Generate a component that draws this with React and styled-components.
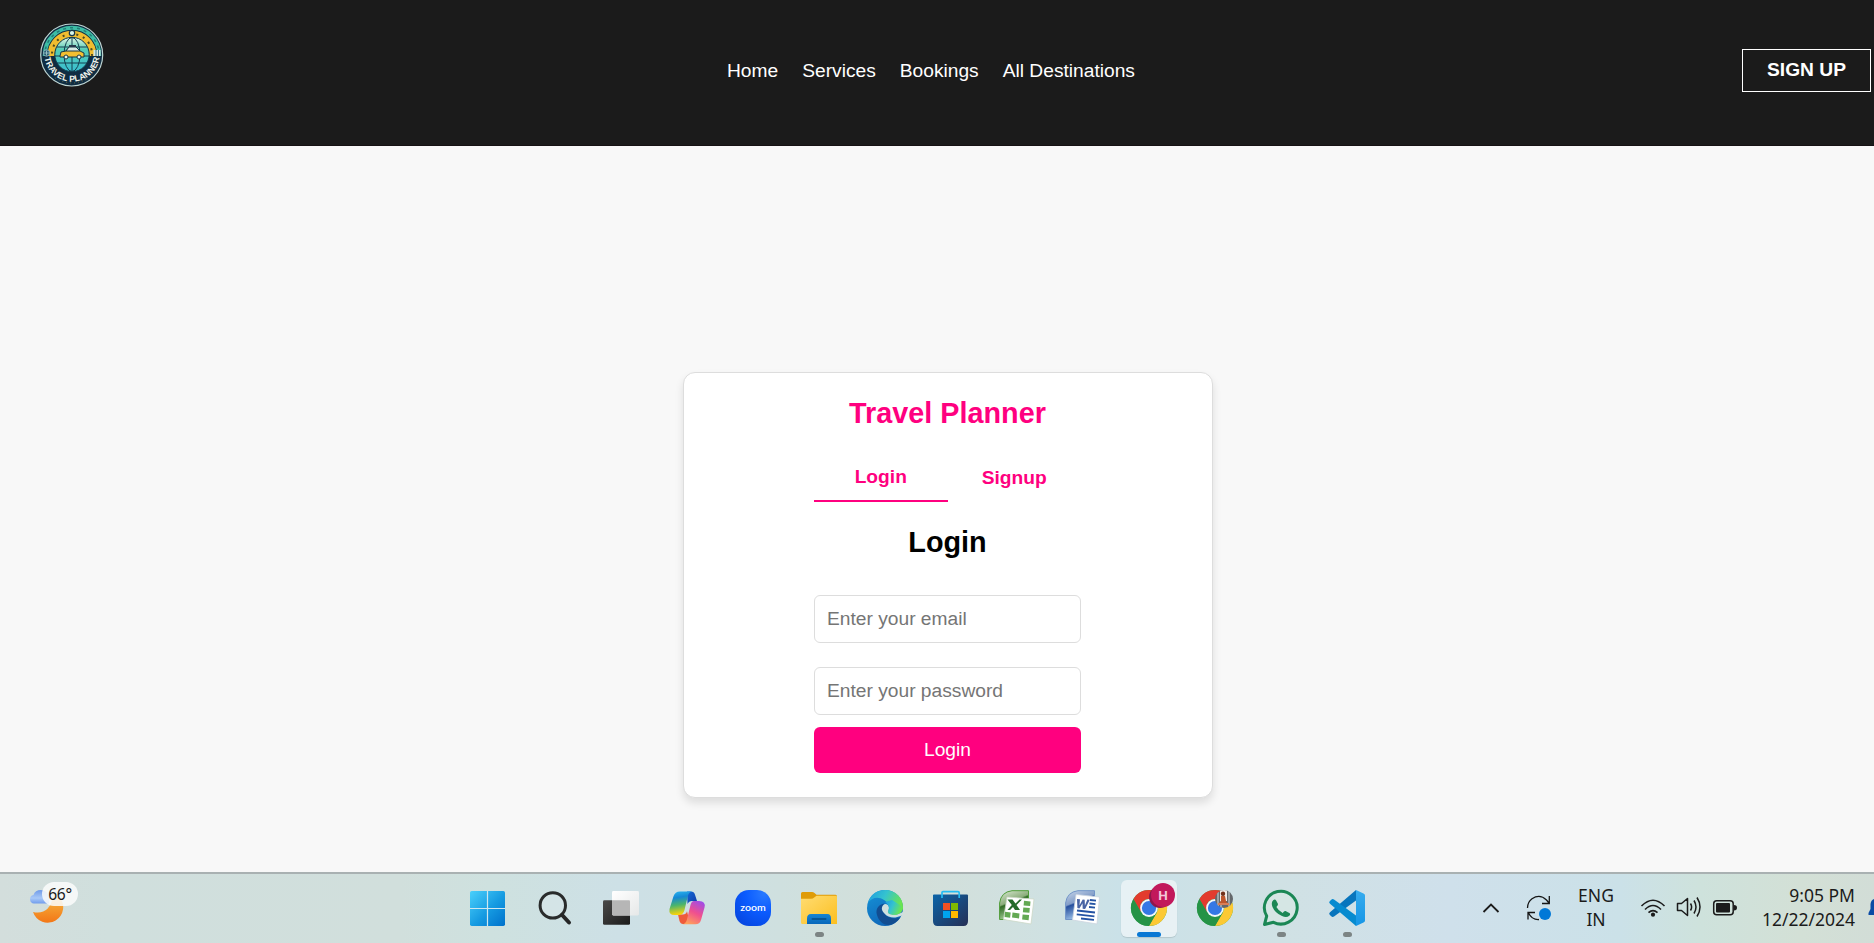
import React from "react";
import styled, { createGlobalStyle } from "styled-components";

const GlobalStyle = createGlobalStyle`
  * { box-sizing: border-box; }
  body {
    margin: 0;
    background: #f8f8f8;
    font-family: "Liberation Sans", Arial, sans-serif;
    font-size: 19.2px;
    overflow: hidden;
  }
`;

const Screen = styled.div`
  display: flex;
  flex-direction: column;
  width: 100%;
  height: 943px;
`;

const Header = styled.header`
  display: flex;
  align-items: center;
  height: 146px;
  padding: 0 3px 5px 0;
  background: #1b1b1b;
  border-bottom: 1px solid #161214;
`;

const LogoArea = styled.div`
  flex: 0 0 727px;
  align-self: flex-start;
  padding: 22px 0 0 40px;
  svg { display: block; }
`;

const Nav = styled.nav`
  display: flex;
  gap: 24px;
  padding-top: 2px;
`;

const NavLink = styled.a`
  color: #fff;
  line-height: 22px;
  white-space: nowrap;
`;

const SignUpButton = styled.button`
  margin-left: auto;
  width: 129px;
  height: 43px;
  padding: 0;
  border: 1px solid #fff;
  background: transparent;
  color: #fff;
  font: bold 19.2px "Liberation Sans", Arial, sans-serif;
`;

const Main = styled.main`
  flex: 1;
  display: flex;
  justify-content: center;
  align-items: flex-start;
  padding: 226px 0 0 22px;
`;

const Card = styled.section`
  display: flex;
  flex-direction: column;
  align-items: center;
  width: 530px;
  height: 426px;
  padding: 23px 1px 0 0;
  background: #fff;
  border: 1px solid #ddd;
  border-radius: 12px;
  box-shadow: 0 5px 8px rgba(0, 0, 0, 0.11);
`;

const Heading = styled.h2`
  margin: 0;
  font-size: 28.8px;
  line-height: 34px;
  color: ${(p) => (p.$accent ? "#ff007f" : "#000")};
`;

const Tabs = styled.div`
  display: flex;
  width: 267px;
  margin: 23px 0 23px;
`;

const Tab = styled.button`
  flex: 1;
  height: 49px;
  padding: 0;
  border: 0;
  border-bottom: ${(p) => (p.$active ? "2px solid #ff007f" : "0")};
  background: none;
  color: #ff007f;
  font: bold 19.2px "Liberation Sans", Arial, sans-serif;
`;

const Form = styled.form`
  display: flex;
  flex-direction: column;
  width: 267px;
  margin-top: 36px;
`;

const Field = styled.input`
  height: 48px;
  margin-bottom: ${(p) => p.$after}px;
  padding: 0 12px;
  border: 1px solid #ddd;
  border-radius: 6px;
  background: #fff;
  font: 19.2px "Liberation Sans", Arial, sans-serif;
  &::placeholder { color: #757575; opacity: 1; }
`;

const Submit = styled.button`
  height: 46px;
  border: 0;
  border-radius: 6px;
  background: #ff007f;
  color: #fff;
  font: 19.2px "Liberation Sans", Arial, sans-serif;
`;

const Taskbar = styled.footer`
  display: flex;
  height: 71px;
  border-top: 2px solid #a9b1b2;
  background: linear-gradient(90deg, #d3dedc 0, #d0dfdd 110px, #d1dfdc 400px, #cee1df 490px, #cde0e6 620px, #cfe0df 780px, #d3dfd9 910px, #cfe1e2 1050px, #cae1e8 1120px, #d0e1e4 1280px, #cfe0eb 1450px, #cbe1e8 1620px, #cee2dc 1700px, #d3e0d6 1800px, #d2ddd7 1874px);
  color: #1b1b1b;
  font-family: "Noto Sans", "Open Sans", sans-serif;
`;

const Weather = styled.div`
  position: relative;
  flex: 0 0 456px;
  padding: 14px 0 0 29px;
  svg { display: block; }
`;

const Temperature = styled.span`
  position: absolute;
  left: 42px;
  top: 8px;
  width: 36px;
  height: 24px;
  border-radius: 12px;
  background: rgba(250, 252, 252, 0.86);
  font-size: 15.6px;
  line-height: 24px;
  letter-spacing: -0.3px;
  text-align: center;
`;

const Apps = styled.div`
  display: flex;
  flex: 0 0 924px;
`;

const AppSlot = styled.div`
  display: flex;
  flex-direction: column;
  align-items: center;
  width: 66px;
  height: 69px;
  padding-top: 6px;
`;

const AppTile = styled.div`
  display: flex;
  flex-direction: column;
  align-items: center;
  justify-content: space-between;
  width: 56px;
  height: 57px;
  padding-top: 10px;
  border-radius: 6px;
  background: ${(p) => (p.$active ? "rgba(255,255,255,.55)" : "transparent")};
  box-shadow: ${(p) => (p.$active ? "0 1px 1px rgba(0,0,0,.12)" : "none")};
  svg { display: block; overflow: visible; }
`;

const Indicator = styled.span`
  width: ${(p) => (p.$active ? 24 : 9)}px;
  height: 5px;
  border-radius: 3px;
  background: ${(p) => (p.$active ? "#0878d4" : p.$open ? "#7c8484" : "transparent")};
`;

const Tray = styled.div`
  flex: 1;
  display: flex;
  align-items: flex-start;
  padding: 10px 0 0 102px;
  svg { display: block; }
`;

const TraySlot = styled.div`
  flex: none;
  width: ${(p) => p.$w}px;
  padding-top: ${(p) => p.$top || 0}px;
`;

const TrayText = styled.div`
  flex: none;
  width: ${(p) => p.$w}px;
  margin-top: -1px;
  font-size: 17.5px;
  line-height: 24px;
  letter-spacing: ${(p) => p.$spacing}px;
  text-align: ${(p) => p.$align};
  white-space: nowrap;
`;

const Logo = () => (
  <svg width="64" height="66" viewBox="0 0 64 66">
    <defs>
      <linearGradient id="globe" x2="0" y2="1">
        <stop stopColor="#e4f6e8" /><stop offset=".35" stopColor="#55cdb5" /><stop offset="1" stopColor="#39bed0" />
      </linearGradient>
      <path id="logoArc" d="M4.600 36A27.700 27.700 0 0 0 59.400 36" />
      <clipPath id="upper"><path d="M0 0H64V34H0Z" /></clipPath>
    </defs>
    <circle cx="31.700" cy="33" r="31" fill="#102d42" stroke="#bed5d3" strokeWidth="1.2" />
    <g clipPath="url(#upper)" fill="none">
      <circle cx="32" cy="33" r="27.2" stroke="#3dbda5" strokeWidth="4" />
      <circle cx="32" cy="33" r="27.2" stroke="#247c77" strokeWidth="1.5" strokeDasharray="3 4" />
      <circle cx="32" cy="33" r="20.8" stroke="#f0bd30" strokeWidth="7" />
      <circle cx="32" cy="32" r="20" stroke="#4f4a20" strokeWidth="2" strokeDasharray="2 5" />
    </g>
    <circle cx="32" cy="32.500" r="17.2" fill="url(#globe)" stroke="#12394a" />
    <g fill="none" stroke="#143f50" strokeWidth="1">
      <path d="M32 15V49M17 25H47M14 34H50M17 41H47" />
      <ellipse cx="32" cy="32.500" rx="8" ry="17" />
    </g>
    <path d="M20 34L21 30L26 29L29 25H36L40 29L44 31V35H20Z" fill="#f3bf31" stroke="#173749" />
    <path d="M26 29L29 25H36L40 29Z" fill="#d8ece5" stroke="#173749" />
    <path d="M29 24h7" stroke="#26394a" strokeWidth="2" />
    <circle cx="26" cy="35" r="2" fill="#e4f5ef" stroke="#153546" />
    <circle cx="39" cy="35" r="2" fill="#e4f5ef" stroke="#153546" />
    <circle cx="32" cy="11" r="2.7" fill="#d8f6ec" stroke="#183647" strokeWidth="1.2" />
    <circle cx="6.500" cy="31" r="3.2" fill="#255c72" stroke="#97bbc3" strokeWidth=".8" />
    <path d="M4 31H9M6.500 28.500V33.500" stroke="#a9cdd1" strokeWidth=".8" />
    <rect x="53.5" y="28" width="7" height="6" fill="#d3e6e1" />
    <path d="M56 28V34M58.5 28V34" stroke="#36748b" />
    <path d="M15 56Q32 66 49 56" fill="none" stroke="#827f49" strokeWidth=".8" strokeDasharray="1 3" />
    <text fill="#f2f5ee" fontFamily="Liberation Sans" fontWeight="700" fontSize="8.600">
      <textPath href="#logoArc" startOffset="50%" textAnchor="middle" textLength="79">TRAVEL PLANNER</textPath>
    </text>
  </svg>
);

const WeatherIcon = () => (
  <svg width="38" height="38" viewBox="0 0 38 38">
    <defs>
      <linearGradient id="moon" x2="0" y2="1"><stop stopColor="#f5b640" /><stop offset="1" stopColor="#f37717" /></linearGradient>
      <linearGradient id="cloud" x2="0" y2="1"><stop stopColor="#6f9ae9" /><stop offset=".6" stopColor="#a9c9f7" /><stop offset="1" stopColor="#709ced" /></linearGradient>
    </defs>
    <path d="M5 15.500a4.300 4.300 0 0 1-.5-8.500Q6 2 12 2q7 1 8 7v6.500Z" fill="url(#cloud)" />
    <path d="M30 8.500A15.500 15.500 0 1 1 4 24Q20 27.500 24 9Z" fill="url(#moon)" />
  </svg>
);

const Icon = ({ children }) => <svg width="36" height="36" viewBox="0 0 36 36">{children}</svg>;

const StartIcon = () => (
  <Icon>
    <defs><linearGradient id="win" x2="1" y2="1"><stop stopColor="#4bd0fb" /><stop offset=".55" stopColor="#159ae1" /><stop offset="1" stopColor="#0071cb" /></linearGradient></defs>
    <rect x="-1" y="1" width="35" height="35" rx="1.7" fill="url(#win)" />
    <path d="M16.500 1V36M-1 18.500H34" stroke="#cfe7ef" strokeWidth="1.2" />
  </Icon>
);

const SearchIcon = () => (
  <Icon>
    <circle cx="15.800" cy="15.4" r="12.7" fill="#d8e6e9" fillOpacity=".6" stroke="#292b2b" strokeWidth="3" />
    <path d="M25.100 25L32 32.500" stroke="#252626" strokeWidth="4" strokeLinecap="round" />
  </Icon>
);

const TaskViewIcon = () => (
  <Icon>
    <defs>
      <linearGradient id="tv1" x2="1" y2="1"><stop stopColor="#4a4a49" /><stop offset="1" stopColor="#1b1b1b" /></linearGradient>
      <linearGradient id="tv2" x2="1" y2="1"><stop stopColor="#fff" /><stop offset="1" stopColor="#e6e8e8" /></linearGradient>
    </defs>
    <rect x="0" y="10.2" width="27" height="24.6" rx="1.4" fill="url(#tv1)" />
    <rect x="9" y="1" width="27" height="24.4" rx="1.4" fill="url(#tv2)" />
    <path d="M9 10.2H26Q27 10.2 27 11.2V25.4H10.4Q9 25.4 9 24Z" fill="#b6b6b6" />
  </Icon>
);

const CopilotIcon = () => (
  <Icon>
    <defs>
      <linearGradient id="cpA" x2=".15" y2="1"><stop stopColor="#2bb8f2" /><stop offset=".3" stopColor="#1588d4" /><stop offset=".62" stopColor="#4bb56c" /><stop offset="1" stopColor="#f7d30c" /></linearGradient>
      <linearGradient id="cpB" x1=".8" x2=".3" y2="1"><stop stopColor="#a04ce8" /><stop offset=".5" stopColor="#f0508e" /><stop offset="1" stopColor="#ffa25a" /></linearGradient>
      <linearGradient id="cpC" x2="1" y2="1"><stop stopColor="#1268d8" /><stop offset="1" stopColor="#113aa5" /></linearGradient>
    </defs>
    <path d="M18 1.500h4q3 0 4 3.200l2 6.400h-5q-3 0-4.500 3Z" fill="url(#cpC)" />
    <path d="M9 24.500h5q3 0 4-3.300L20 29l-3 5h-3q-2.500 0-3.500-3Z" fill="#ef5b3b" />
    <path d="M11 1.500h12q-3 .5-4 4L15.500 20q-1.300 5-5.500 5H5.500q-6 0-5-6L4.500 6.300Q6 1.500 11 1.500Z" fill="url(#cpA)" />
    <path d="M25 11h5q7 0 5.500 6.500L32 30q-1.300 4.300-5.500 4.300H13q3.700-.4 4.800-4.300L21.500 15q1-4 3.500-4Z" fill="url(#cpB)" />
  </Icon>
);

const ZoomIcon = () => (
  <Icon>
    <defs><radialGradient id="zm" cx=".8" cy=".1" r="1"><stop stopColor="#2879ff" /><stop offset=".5" stopColor="#0b5cff" /><stop offset="1" stopColor="#0648e3" /></radialGradient></defs>
    <rect x="0" y="0" width="36" height="36" rx="14" fill="url(#zm)" />
    <text x="18" y="20.800" textAnchor="middle" textLength="25.500" lengthAdjust="spacingAndGlyphs" fill="#fff" fontFamily="Lato" fontWeight="600" fontSize="10">zoom</text>
  </Icon>
);

const FolderIcon = () => (
  <Icon>
    <defs>
      <linearGradient id="fold" x2="1" y2="1"><stop stopColor="#ffdc72" /><stop offset="1" stopColor="#fcbf20" /></linearGradient>
      <linearGradient id="foldB" x2="0" y2="1"><stop stopColor="#1785d4" /><stop offset="1" stopColor="#0767bb" /></linearGradient>
    </defs>
    <path d="M0 3.500Q0 2 1.500 2H11Q12.500 2 13.500 3L15.500 4.800H34.500Q36 4.800 36 6.500V12H0Z" fill="#df9b08" />
    <path d="M0 8.800H10Q12 8.800 13.500 7.300L15.500 5.700H35Q36 5.700 36 7V34H1.500Q0 34 0 32.500Z" fill="url(#fold)" />
    <path d="M6 34V28.500Q6 24 10 24H26.500Q30 24 30 28.500V34Z" fill="url(#foldB)" />
    <path d="M11.500 29H24.500" stroke="#075697" strokeWidth="2" strokeLinecap="round" />
  </Icon>
);

const EdgeIcon = () => (
  <Icon>
    <defs>
      <linearGradient id="edA" x2="1" y2=".4"><stop stopColor="#1c9be1" /><stop offset=".5" stopColor="#35c3cf" /><stop offset="1" stopColor="#6be64e" /></linearGradient>
      <linearGradient id="edB" x2=".5" y2="1"><stop stopColor="#1694d8" /><stop offset="1" stopColor="#0f66b8" /></linearGradient>
    </defs>
    <circle cx="18" cy="18" r="18" fill="url(#edB)" />
    <path d="M1 13C4 3 11 0 18 0C29 0 36 8 36 17C36 23 31 25 27 25C23 25 20 23 21 21C24 16 20 12 17 10C11 6 4 8 1 13Z" fill="url(#edA)" />
    <path d="M17.500 13.500C12 14 8 19 10 25C12 32 18 37 26 34C30 32 33 28 33.500 27C28 30 20 28 17 23C14 19 15 16 17.500 13.500Z" fill="#124d91" />
    <path d="M18 14C14 16 14 20 17 23C22 29 29 28 33.500 26L36 25V22L31 24.200C27 25.500 20 24.500 21 21.200C23 18 22 14 18 14Z" fill="#d0e0df" />
    <path d="M27 24.800C23 24.500 20.600 22.900 21.300 20.500C23 17 21 14 18 12L25 10L36 17C35.500 22 31 25 27 24.800Z" fill="url(#edA)" />
  </Icon>
);

const StoreIcon = () => (
  <Icon>
    <defs><linearGradient id="store" x2="1" y2="1"><stop stopColor="#0b64a8" /><stop offset="1" stopColor="#262f55" /></linearGradient></defs>
    <path d="M0 5Q0 4.500 1 4.500H34Q35 4.500 35 5.500V31Q35 36 30.500 36H4.500Q0 36 0 31Z" fill="url(#store)" />
    <path d="M9 8V2.500Q9 1.700 10 1.700H25Q26.200 1.700 26.200 3V8" fill="none" stroke="#24bbf2" strokeWidth="1.700" />
    <path fill="#f25022" d="M10 13h7v7h-7z" /><path fill="#7fba00" d="M18 13h7v7h-7z" />
    <path fill="#00a4ef" d="M10 21h7v7h-7z" /><path fill="#ffb900" d="M18 21h7v7h-7z" />
  </Icon>
);

const ExcelIcon = () => (
  <Icon>
    <defs><linearGradient id="xl" x2=".4" y2="1"><stop stopColor="#dcebd5" /><stop offset=".45" stopColor="#8bad7b" /><stop offset=".5" stopColor="#316c26" /><stop offset="1" stopColor="#b6dba8" /></linearGradient></defs>
    <path d="M.6 29.500V13Q2 2 13 .7H29.500V29.500Z" fill="url(#xl)" stroke="#4f9c38" />
    <path d="M8 7L35 9L32 34L4.500 29.500Z" fill="#fff" stroke="#ccd8c7" strokeWidth=".8" />
    <g fill="#63a953">
      <path d="M25 10.800l6.500.6-.4 4.500-6.500-.5zM24.300 17.500l6.500.5-.4 4.800-6.500-.6zM23.600 24.400l6.500.6-.5 5.300-6.500-.9zM13.500 22.500l7 .9-.5 5.100-7-1zM6 21.800l5.700.7-.6 5.200-5.500-.8z" />
    </g>
    <path d="M8.500 9.500h5l3 4 4-4H23l-5.500 5.600 3.500 5h-5l-2-3.200-3 3H8.500l4.300-4.900z" fill="#246b2a" />
  </Icon>
);

const WordIcon = () => (
  <Icon>
    <defs><linearGradient id="wd" x2=".4" y2="1"><stop stopColor="#c9d8eb" /><stop offset=".45" stopColor="#839dc8" /><stop offset=".5" stopColor="#27509e" /><stop offset="1" stopColor="#a9cdf0" /></linearGradient></defs>
    <path d="M.6 29.500V13Q2 2 13 .7H29.500V29.500Z" fill="url(#wd)" stroke="#7194c8" />
    <path d="M11 4.500L34.500 7L32 34L7.500 30Z" fill="#fff" stroke="#cbd4df" strokeWidth=".8" />
    <path d="M12 9l3 .3-.5 6 3.200-5.700 2 .2.200 5.700 2.500-6 2.400.2-4.700 9.300-2.400-.3-.2-5.400-3.100 5.100-2-.3z" fill="#4964a4" />
    <path d="M25 10l6 .6M24.500 13.500l6 .6M24 17l6 .6M12 20.500l18 2M11.700 24.300l17.700 2M16 28.500l13 1.400" stroke="#2453a4" strokeWidth="1.800" />
  </Icon>
);

const ChromeArt = () => (
  <>
    <circle cx="18" cy="18" r="18" fill="#35a853" />
    <path d="M2.400 9A18 18 0 0 1 33.600 9H18A9 9 0 0 0 10.200 13.500L10.200 22.500Z" fill="#e33b2e" />
    <path d="M33.600 9A18 18 0 0 1 18 36L25.800 22.500A9 9 0 0 0 25.800 13.500L18 9Z" fill="#fcc934" />
    <path d="M2.400 9A18 18 0 0 0 18 36L25.800 22.500H10.200Z" fill="#259346" />
    <circle cx="18" cy="18" r="8.900" fill="#f3f8fa" /><circle cx="18" cy="18" r="7.100" fill="#3478e5" />
  </>
);

const ChromeProfile = () => (
  <Icon>
    <ChromeArt />
    <circle cx="29" cy="7" r="11" fill="#8d174c" />
    <circle cx="32" cy="5" r="12" fill="#c2185b" />
    <text x="32" y="9.900" textAnchor="middle" fill="#f3c8d9" fontFamily="Roboto" fontWeight="700" fontSize="13.500">H</text>
  </Icon>
);

const ChromePhoto = () => (
  <Icon>
    <ChromeArt />
    <clipPath id="avatar"><circle cx="27" cy="9" r="9" /></clipPath>
    <g clipPath="url(#avatar)">
      <path d="M18 0H36V18H18Z" fill="#65686b" />
      <path d="M21 0V18M24 0V18M32 0V18" stroke="#d8dcdd" />
      <path d="M23 0H30V11H23Z" fill="#f1ece8" />
      <circle cx="26" cy="3.800" r="2.200" fill="#723019" />
      <path d="M24 6H28L29 11L31 14H21L24 11Z" fill="#be562c" />
      <path d="M21 14H32" stroke="#d97d55" strokeWidth="2" />
    </g>
  </Icon>
);

const WhatsAppIcon = () => (
  <Icon>
    <path d="M1.500 34.500L3.700 26A16.400 16.400 0 1 1 10.500 32.300Z" fill="#d5e6e4" stroke="#1b8755" strokeWidth="3" strokeLinejoin="round" />
    <path d="M10.200 10.200Q12 8.700 13.300 10.700L15 14Q15.300 15.200 13.400 17Q15.500 21 19.700 22.900Q21.300 20.600 22.500 21L26.300 23Q28 24 26.300 25.700Q23.500 28 19 26Q12 23 9.500 17Q7.800 12.700 10.200 10.200Z" fill="#1b8755" />
  </Icon>
);

const VSCodeIcon = () => (
  <Icon>
    <defs><linearGradient id="vsc" x2="0" y2="1"><stop stopColor="#37acee" /><stop offset="1" stopColor="#1595e6" /></linearGradient></defs>
    <path d="M27 0V10.500L5 26.500Q3.500 27.500 2 26L.7 24.800Q-.5 23.600 1 22.300Z" fill="#0875bd" />
    <path d="M27 36V25.500L5 9.500Q3.500 8.500 2 10L.7 11.200Q-.5 12.400 1 13.700Z" fill="#078bd0" />
    <path d="M27 0L34.500 3.400Q36 4 36 5.500V30.500Q36 32 34.500 32.600L27 36Z" fill="url(#vsc)" />
  </Icon>
);

const APPS = [
  { name: "start", icon: StartIcon },
  { name: "search", icon: SearchIcon },
  { name: "taskview", icon: TaskViewIcon },
  { name: "copilot", icon: CopilotIcon },
  { name: "zoom", icon: ZoomIcon },
  { name: "files", icon: FolderIcon, open: true },
  { name: "edge", icon: EdgeIcon },
  { name: "store", icon: StoreIcon },
  { name: "excel", icon: ExcelIcon },
  { name: "word", icon: WordIcon },
  { name: "chrome", icon: ChromeProfile, active: true },
  { name: "chrome-photo", icon: ChromePhoto },
  { name: "whatsapp", icon: WhatsAppIcon, open: true },
  { name: "vscode", icon: VSCodeIcon, open: true },
];

const ChevronIcon = () => (
  <svg width="18" height="12" viewBox="0 0 18 12"><path d="M1.500 10L9 2.500L16.500 10" fill="none" stroke="#1b1b1b" strokeWidth="1.800" /></svg>
);

const SyncIcon = () => (
  <svg width="26" height="26" viewBox="0 0 26 26">
    <path d="M1.500 13Q1.500 7 6 3.700Q14-1.500 20.500 5L23 8M23.300 1V8.500H16M2 24.500V17.500H9M2.500 18Q6 25 13 24.500" fill="none" stroke="#151515" strokeWidth="1.300" />
    <circle cx="19" cy="19" r="6" fill="#0078d7" />
  </svg>
);

const WifiIcon = () => (
  <svg width="26" height="20" viewBox="0 0 26 20">
    <path d="M1.500 8Q13-3.500 24.500 8M5 11.500Q13 3.500 21 11.500M8.500 14.700Q13 10.500 17.500 14.700" fill="none" stroke="#1b1b1b" strokeWidth="1.600" />
    <circle cx="13" cy="16.700" r="2.100" fill="#1b1b1b" />
  </svg>
);

const SpeakerIcon = () => (
  <svg width="26" height="22" viewBox="0 0 26 22">
    <path d="M1.500 7.500H5.500L11.500 2.500V19.500L5.500 14.500H1.500Z" fill="none" stroke="#1b1b1b" strokeWidth="1.500" strokeLinejoin="round" />
    <path d="M14.500 7.500Q16.700 11 14.500 14.500M18 4.500Q22 11 18 17.500M21 1.500Q27 11 21 20.500" fill="none" stroke="#1b1b1b" strokeWidth="1.500" />
  </svg>
);

const BatteryIcon = () => (
  <svg width="26" height="18" viewBox="0 0 26 18">
    <rect x="1.700" y="1.700" width="19.500" height="14" rx="3" fill="none" stroke="#1b1b1b" strokeWidth="1.500" />
    <rect x="4" y="4" width="14" height="9.500" rx="1" fill="#1b1b1b" />
    <path d="M22 6Q25 6 25 8.700T22 11.400Z" fill="#1b1b1b" />
  </svg>
);

const BellIcon = () => (
  <svg width="6" height="20" viewBox="0 0 6 20">
    <path d="M6 1Q3 2 2.500 6V11L.5 15V17H6Z" fill="#0a4ba5" />
  </svg>
);

export default function App() {
  return (
    <Screen>
      <GlobalStyle />
      <Header>
        <LogoArea><Logo /></LogoArea>
        <Nav>
          {["Home", "Services", "Bookings", "All Destinations"].map((label) => (
            <NavLink key={label}>{label}</NavLink>
          ))}
        </Nav>
        <SignUpButton>SIGN UP</SignUpButton>
      </Header>
      <Main>
        <Card>
          <Heading $accent>Travel Planner</Heading>
          <Tabs>
            <Tab $active>Login</Tab>
            <Tab>Signup</Tab>
          </Tabs>
          <Heading>Login</Heading>
          <Form>
            <Field type="email" placeholder="Enter your email" $after={24} />
            <Field type="password" placeholder="Enter your password" $after={12} />
            <Submit type="button">Login</Submit>
          </Form>
        </Card>
      </Main>
      <Taskbar>
        <Weather>
          <WeatherIcon />
          <Temperature>66°</Temperature>
        </Weather>
        <Apps>
          {APPS.map(({ name, icon: AppIcon, open, active }) => (
            <AppSlot key={name}>
              <AppTile $active={active}>
                <AppIcon />
                <Indicator $open={open} $active={active} />
              </AppTile>
            </AppSlot>
          ))}
        </Apps>
        <Tray>
          <TraySlot $w={44} $top={18}><ChevronIcon /></TraySlot>
          <TraySlot $w={40} $top={11}><SyncIcon /></TraySlot>
          <TrayText $w={60} $spacing={0} $align="center">ENG<br />IN</TrayText>
          <TraySlot $w={14} />
          <TraySlot $w={36} $top={14}><WifiIcon /></TraySlot>
          <TraySlot $w={36} $top={12}><SpeakerIcon /></TraySlot>
          <TraySlot $w={42} $top={15}><BatteryIcon /></TraySlot>
          <TrayText $w={101} $spacing={0} $align="right">9:05 PM<br />12/22/2024</TrayText>
          <TraySlot $w={13} />
          <TraySlot $w={6} $top={14}><BellIcon /></TraySlot>
        </Tray>
      </Taskbar>
    </Screen>
  );
}
